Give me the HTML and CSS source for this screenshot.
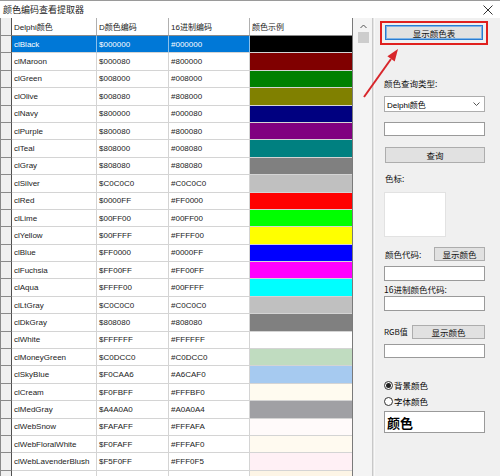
FILE: index.html
```html
<!DOCTYPE html>
<html>
<head>
<meta charset="utf-8">
<link rel="stylesheet" href="styles.css">
</head>
<body>
<div class="window">
  <div class="titlebar">
    <span class="title">颜色编码查看提取器</span>
    <svg class="close" width="10" height="10" viewBox="0 0 10 10"><path d="M0.5 0.5L9.5 9.5M9.5 0.5L0.5 9.5" stroke="#333" stroke-width="1"/></svg>
  </div>
  <div class="main">
    <div class="grid">
      <div class="row head"><div class="ind"></div><div class="cell">Delphi颜色</div><div class="cell">D颜色编码</div><div class="cell">16进制编码</div><div class="cell">颜色示例</div></div>
      <div class="row sel"><div class="ind"></div><div class="cell">clBlack</div><div class="cell">$000000</div><div class="cell">#000000</div><div class="cell sw"><div style="background:#000000"></div></div></div>
      <div class="row"><div class="ind"></div><div class="cell">clMaroon</div><div class="cell">$000080</div><div class="cell">#800000</div><div class="cell sw"><div style="background:#800000"></div></div></div>
      <div class="row"><div class="ind"></div><div class="cell">clGreen</div><div class="cell">$008000</div><div class="cell">#008000</div><div class="cell sw"><div style="background:#008000"></div></div></div>
      <div class="row"><div class="ind"></div><div class="cell">clOlive</div><div class="cell">$008080</div><div class="cell">#808000</div><div class="cell sw"><div style="background:#808000"></div></div></div>
      <div class="row"><div class="ind"></div><div class="cell">clNavy</div><div class="cell">$800000</div><div class="cell">#000080</div><div class="cell sw"><div style="background:#000080"></div></div></div>
      <div class="row"><div class="ind"></div><div class="cell">clPurple</div><div class="cell">$800080</div><div class="cell">#800080</div><div class="cell sw"><div style="background:#800080"></div></div></div>
      <div class="row"><div class="ind"></div><div class="cell">clTeal</div><div class="cell">$808000</div><div class="cell">#008080</div><div class="cell sw"><div style="background:#008080"></div></div></div>
      <div class="row"><div class="ind"></div><div class="cell">clGray</div><div class="cell">$808080</div><div class="cell">#808080</div><div class="cell sw"><div style="background:#808080"></div></div></div>
      <div class="row"><div class="ind"></div><div class="cell">clSilver</div><div class="cell">$C0C0C0</div><div class="cell">#C0C0C0</div><div class="cell sw"><div style="background:#C0C0C0"></div></div></div>
      <div class="row"><div class="ind"></div><div class="cell">clRed</div><div class="cell">$0000FF</div><div class="cell">#FF0000</div><div class="cell sw"><div style="background:#FF0000"></div></div></div>
      <div class="row"><div class="ind"></div><div class="cell">clLime</div><div class="cell">$00FF00</div><div class="cell">#00FF00</div><div class="cell sw"><div style="background:#00FF00"></div></div></div>
      <div class="row"><div class="ind"></div><div class="cell">clYellow</div><div class="cell">$00FFFF</div><div class="cell">#FFFF00</div><div class="cell sw"><div style="background:#FFFF00"></div></div></div>
      <div class="row"><div class="ind"></div><div class="cell">clBlue</div><div class="cell">$FF0000</div><div class="cell">#0000FF</div><div class="cell sw"><div style="background:#0000FF"></div></div></div>
      <div class="row"><div class="ind"></div><div class="cell">clFuchsia</div><div class="cell">$FF00FF</div><div class="cell">#FF00FF</div><div class="cell sw"><div style="background:#FF00FF"></div></div></div>
      <div class="row"><div class="ind"></div><div class="cell">clAqua</div><div class="cell">$FFFF00</div><div class="cell">#00FFFF</div><div class="cell sw"><div style="background:#00FFFF"></div></div></div>
      <div class="row"><div class="ind"></div><div class="cell">clLtGray</div><div class="cell">$C0C0C0</div><div class="cell">#C0C0C0</div><div class="cell sw"><div style="background:#C0C0C0"></div></div></div>
      <div class="row"><div class="ind"></div><div class="cell">clDkGray</div><div class="cell">$808080</div><div class="cell">#808080</div><div class="cell sw"><div style="background:#808080"></div></div></div>
      <div class="row"><div class="ind"></div><div class="cell">clWhite</div><div class="cell">$FFFFFF</div><div class="cell">#FFFFFF</div><div class="cell sw"><div style="background:#FFFFFF"></div></div></div>
      <div class="row"><div class="ind"></div><div class="cell">clMoneyGreen</div><div class="cell">$C0DCC0</div><div class="cell">#C0DCC0</div><div class="cell sw"><div style="background:#C0DCC0"></div></div></div>
      <div class="row"><div class="ind"></div><div class="cell">clSkyBlue</div><div class="cell">$F0CAA6</div><div class="cell">#A6CAF0</div><div class="cell sw"><div style="background:#A6CAF0"></div></div></div>
      <div class="row"><div class="ind"></div><div class="cell">clCream</div><div class="cell">$F0FBFF</div><div class="cell">#FFFBF0</div><div class="cell sw"><div style="background:#FFFBF0"></div></div></div>
      <div class="row"><div class="ind"></div><div class="cell">clMedGray</div><div class="cell">$A4A0A0</div><div class="cell">#A0A0A4</div><div class="cell sw"><div style="background:#A0A0A4"></div></div></div>
      <div class="row"><div class="ind"></div><div class="cell">clWebSnow</div><div class="cell">$FAFAFF</div><div class="cell">#FFFAFA</div><div class="cell sw"><div style="background:#FFFAFA"></div></div></div>
      <div class="row"><div class="ind"></div><div class="cell">clWebFloralWhite</div><div class="cell">$F0FAFF</div><div class="cell">#FFFAF0</div><div class="cell sw"><div style="background:#FFFAF0"></div></div></div>
      <div class="row"><div class="ind"></div><div class="cell">clWebLavenderBlush</div><div class="cell">$F5F0FF</div><div class="cell">#FFF0F5</div><div class="cell sw"><div style="background:#FFF0F5"></div></div></div>
      <div class="row"><div class="ind"></div><div class="cell">clWebOldLace</div><div class="cell">$E6F5FD</div><div class="cell">#FDF5E6</div><div class="cell sw"><div style="background:#FDF5E6"></div></div></div>
    </div>
    <div class="vscroll">
      <svg class="uparrow" width="7" height="5" viewBox="0 0 7 5"><path d="M0.5 4L3.5 1L6.5 4" fill="none" stroke="#555" stroke-width="1"/></svg>
      <div class="thumb"></div>
    </div>
    <div class="splitter"></div>
    <div class="panel">
      <div class="hl"><div class="btn focus wide">显示颜色表</div></div>
      <div class="label l-type">颜色查询类型:</div>
      <div class="select"><span>Delphi颜色</span><svg width="7" height="4" viewBox="0 0 7 4"><path d="M0.5 0.5L3.5 3.5L6.5 0.5" fill="none" stroke="#555" stroke-width="1"/></svg></div>
      <div class="input i-query"></div>
      <div class="btn full b-query">查询</div>
      <div class="label l-mark">色标:</div>
      <div class="markbox"></div>
      <div class="lrow r-code"><span class="label">颜色代码:</span><div class="btn b-show1">显示颜色</div></div>
      <div class="input i-code"></div>
      <div class="label l-hex">16进制颜色代码:</div>
      <div class="input i-hex"></div>
      <div class="lrow r-rgb"><span class="label rgb">RGB值</span><div class="btn b-show2">显示颜色</div></div>
      <div class="input i-rgb"></div>
      <div class="radio r1"><span class="dot on"></span>背景颜色</div>
      <div class="radio r2"><span class="dot"></span>字体颜色</div>
      <div class="preview">颜色</div>
    </div>
  </div>
  <svg class="arrow" width="500" height="476" viewBox="0 0 500 476">
    <line x1="364" y1="97" x2="391" y2="59" stroke="#d8262b" stroke-width="2"/>
    <polygon points="398,49 394.7,61.4 387.4,56.2" fill="#d8262b"/>
  </svg>
</div>
</body>
</html>
```
FILE: styles.css
```css
* { box-sizing: border-box; }
body {
  margin: 0;
  width: 500px;
  height: 476px;
  overflow: hidden;
  background: #f0f0f0;
  font-family: "Liberation Sans", "Noto Sans CJK SC", sans-serif;
  font-size: 8px;
  color: #000;
}
.window { position: relative; width: 500px; height: 476px; }
.titlebar {
  height: 18px;
  background: #fff;
  border-top: 1px solid #9a9a9a;
  display: flex;
  align-items: center;
  justify-content: space-between;
  padding: 0 7px 0 3px;
}
.title { font-family: "Noto Sans CJK SC", sans-serif; font-size: 9px; color: #222; }
.main { display: flex; height: 458px; }
.grid {
  width: 353px;
  background: #fff;
  border-right: 1px solid #7a7a7a;
  overflow: hidden;
}
.row {
  display: grid;
  grid-template-columns: 12px 85px 72px 81px 102px;
  height: 17.4px;
}
.row.head { height: 18px; }
.ind {
  background: #f0f0f0;
  border-left: 1px solid #8a8a8a;
  border-right: 1px solid #505050;
  border-bottom: 1px solid #8a8a8a;
}
.cell {
  border-right: 1px solid #d4d4d4;
  border-bottom: 1px solid #d4d4d4;
  padding-left: 2px;
  display: flex;
  align-items: center;
  white-space: nowrap;
  overflow: hidden;
  color: #222;
}
.head .cell {
  border-bottom: 1px solid #8a8a8a;
  border-right: 1px solid #b0b0b0;
  background: #fff;
}
.head .cell:last-child { border-right: none; }
.sel .cell { background: #0078d7; color: #fff; border-right-color: #8cc0ea; }
.sel .cell.sw { background: #fff; }
.cell.sw { padding: 0; border-right: none; align-items: stretch; }
.cell.sw > div { flex: 1; }
.vscroll {
  width: 20px;
  background: #f4f4f4;
  border-right: 1px solid #c8c8c8;
  display: flex;
  flex-direction: column;
  align-items: flex-end;
  padding-right: 3px;
}
.uparrow { margin: 6px 2px 0 0; }
.thumb { width: 11px; height: 11px; background: #cdcdcd; margin-top: 3px; }
.splitter { width: 2px; background: #e4e4e4; border-right: 1px solid #f8f8f8; }
.panel {
  flex: 1;
  display: flex;
  flex-direction: column;
  align-items: flex-start;
  padding-left: 9px;
  font-family: "Noto Sans CJK SC", sans-serif;
  font-size: 8.5px;
}
.label { line-height: 14px; height: 14px; color: #111; }
.btn {
  background: #e1e1e1;
  border: 1px solid #adadad;
  display: flex;
  align-items: center;
  justify-content: center;
  color: #111;
}
.hl {
  margin: 3px 0 0 -4px;
  border: 2px solid #e0201e;
  padding: 2px 3px 3px;
}
.btn.focus { border: 1px solid #2a7bd0; box-shadow: inset 0 0 0 1px #7fb4e6; }
.btn.wide { width: 98px; height: 15px; }
.l-type { margin-top: 31px; }
.select {
  margin-top: 6px;
  width: 101px;
  height: 16px;
  background: #fff;
  border: 1px solid #adadad;
  display: flex;
  align-items: center;
  justify-content: space-between;
  padding: 0 4px 0 2px;
  font-family: "Liberation Sans", "Noto Sans CJK SC", sans-serif;
  font-size: 8px;
}
.input {
  width: 101px;
  height: 15px;
  background: #fff;
  border: 1px solid #9a9a9a;
}
.i-query { margin-top: 10px; height: 14px; }
.btn.full { width: 100px; height: 16px; margin-left: 1px; }
.b-query { margin-top: 11px; }
.l-mark { margin-top: 8px; margin-left: 1px; }
.markbox { margin-top: 7px; width: 62px; height: 45px; background: #fff; border: 1px solid #e2e2e2; }
.lrow { display: flex; align-items: center; justify-content: space-between; width: 101px; }
.r-code { margin-top: 10px; padding-left: 1px; }
.b-show1 { width: 51px; height: 14px; }
.i-code { margin-top: 5px; }
.l-hex { margin-top: 1px; }
.i-hex { margin-top: 0; }
.r-rgb { margin-top: 14px; }
.rgb { font-size: 8px; }
.b-show2 { width: 73px; height: 14px; }
.i-rgb { margin-top: 5px; height: 14px; }
.radio { display: flex; align-items: center; height: 14px; gap: 1px; }
.r1 { margin-top: 20px; }
.r2 { margin-top: 2px; }
.dot {
  width: 9px;
  height: 9px;
  border-radius: 50%;
  border: 1px solid #333;
  background: #fff;
  display: flex;
  align-items: center;
  justify-content: center;
}
.dot.on::after { content: ""; width: 5px; height: 5px; border-radius: 50%; background: #222; }
.preview {
  margin-top: 3px;
  width: 101px;
  height: 22px;
  background: #fff;
  border: 1px solid #9a9a9a;
  font-size: 13px;
  font-weight: bold;
  display: flex;
  align-items: center;
  padding-left: 2px;
}
.arrow { position: absolute; left: 0; top: 0; pointer-events: none; }
```
